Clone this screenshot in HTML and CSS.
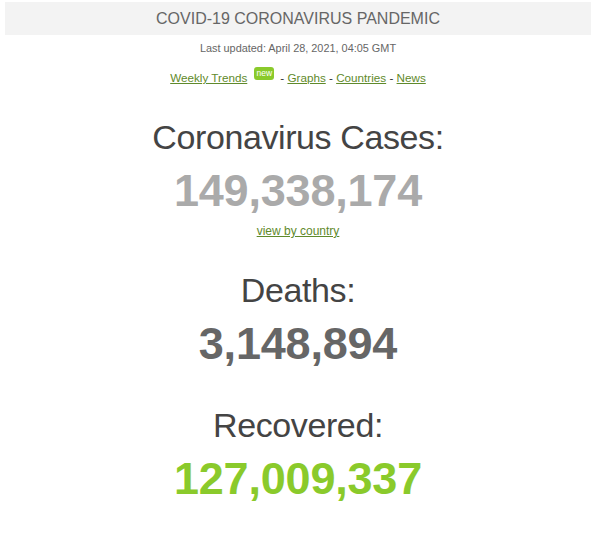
FILE: index.html
```html
<!DOCTYPE html>
<html>
<head>
<meta charset="utf-8">
<link rel="stylesheet" href="styles.css">
</head>
<body>
<div class="page">
  <div class="title-bar">COVID-19 CORONAVIRUS PANDEMIC</div>
  <div class="updated">Last updated: April 28, 2021, 04:05 GMT</div>
  <div class="nav">
    <a href="#">Weekly Trends</a><span class="badge">new</span>- <a href="#">Graphs</a> - <a href="#">Countries</a> - <a href="#">News</a>
  </div>
  <div class="counter first">
    <h1>Coronavirus Cases:</h1>
    <div class="number cases">149,338,174</div>
    <div class="by-country"><a href="#">view by country</a></div>
  </div>
  <div class="counter deaths-block">
    <h1>Deaths:</h1>
    <div class="number deaths">3,148,894</div>
  </div>
  <div class="counter recovered-block">
    <h1>Recovered:</h1>
    <div class="number recovered">127,009,337</div>
  </div>
</div>
</body>
</html>
```
FILE: styles.css
```css
html, body {
  margin: 0;
  padding: 0;
  background: #fff;
}

body {
  font-family: "Liberation Sans", Arial, sans-serif;
  color: #666;
}

.page {
  width: 586px;
  margin: 0 0 0 5px;
  padding-top: 2px;
  text-align: center;
}

.title-bar {
  background: #f3f3f3;
  height: 33px;
  line-height: 33px;
  font-size: 16px;
  color: #666;
}

.updated {
  margin-top: 6px;
  font-size: 10.9px;
  line-height: 14px;
  color: #666;
}

.nav {
  margin-top: 11px;
  font-size: 11.7px;
  line-height: 24px;
  color: #333;
}

.nav a,
.by-country a {
  color: #5f8a2b;
  text-decoration: underline;
}

.badge {
  display: inline-block;
  vertical-align: 6px;
  margin: 0 6px 0 7px;
  width: 20px;
  background: #8aca2b;
  color: #fff;
  border-radius: 3px;
  font-size: 8.5px;
  line-height: 13px;
  text-align: center;
}

.counter h1 {
  margin: 0 0 9px;
  font-weight: normal;
  font-size: 34px;
  line-height: 40px;
  letter-spacing: -0.4px;
  color: #444;
}

.counter.first { margin-top: 27px; }
.counter.deaths-block { margin-top: 32px; }
.counter.recovered-block { margin-top: 36px; }

.number {
  font-weight: bold;
  font-size: 45px;
  line-height: 50px;
  letter-spacing: -0.2px;
}

.cases { color: #aaa; }
.deaths { color: #666; }
.recovered { color: #8aca2b; }

.by-country {
  margin-top: 8px;
  font-size: 12px;
  line-height: 14px;
}
```
